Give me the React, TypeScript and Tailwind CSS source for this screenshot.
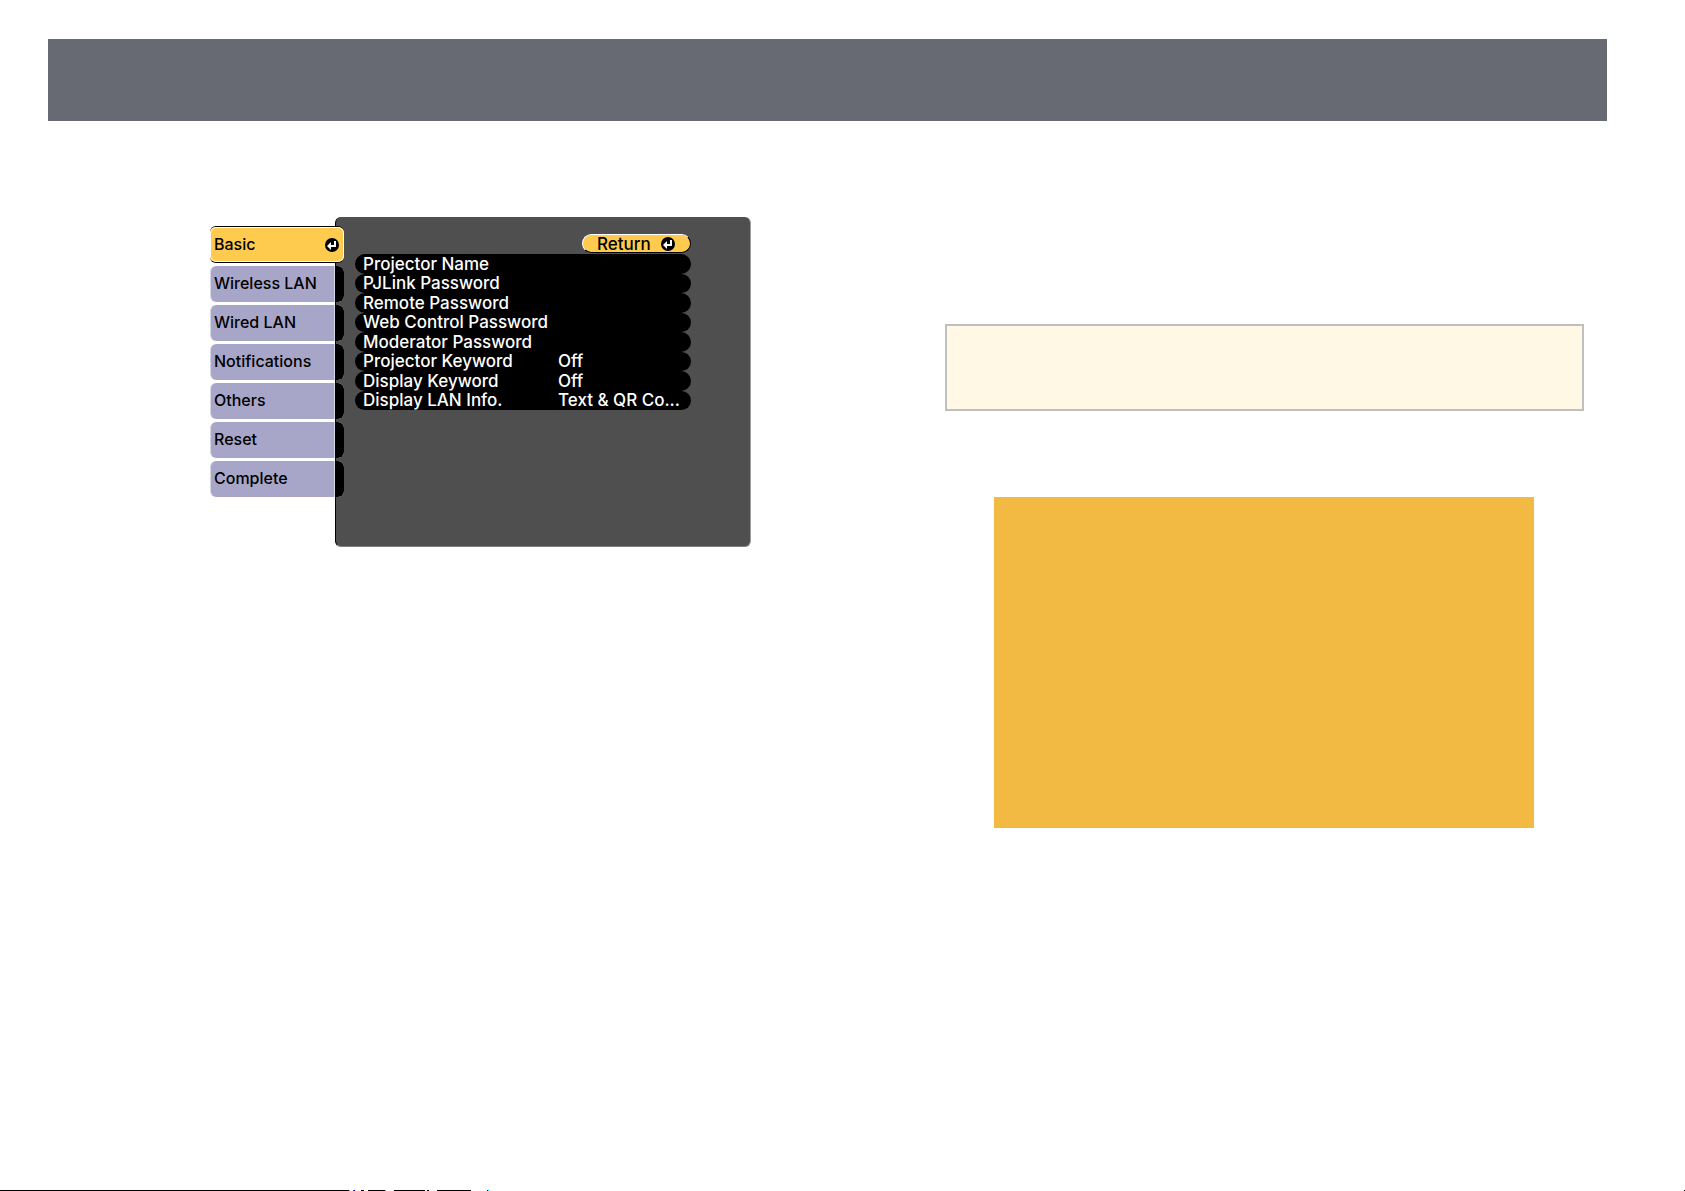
import clsx from 'clsx';

const tabs = [
  'Basic',
  'Wireless LAN',
  'Wired LAN',
  'Notifications',
  'Others',
  'Reset',
  'Complete',
];

const settings = [
  { label: 'Projector Name' },
  { label: 'PJLink Password' },
  { label: 'Remote Password' },
  { label: 'Web Control Password' },
  { label: 'Moderator Password' },
  { label: 'Projector Keyword', value: 'Off' },
  { label: 'Display Keyword', value: 'Off' },
  { label: 'Display LAN Info.', value: 'Text & QR Co...' },
];

function EnterIcon() {
  return (
    <svg viewBox="0 0 14 14" className="size-[14px] shrink-0" aria-hidden="true">
      <circle cx="7" cy="7" r="7" fill="#000" />
      <path d="M9 3h2v6H6v3L2 8l4-4v3h3z" fill="#fff" />
    </svg>
  );
}

type TabProps = {
  label: string;
  active: boolean;
};

function Tab({ label, active }: TabProps) {
  return (
    <button
      type="button"
      aria-current={active}
      className={clsx(
        'flex w-full items-stretch overflow-hidden rounded-md text-left text-black',
        active
          ? 'h-[37px] border-y border-black bg-[#ffcb4f]'
          : 'h-9 border-l border-[#d6d5e5] bg-[#a8a6c8]'
      )}
    >
      <span
        className={clsx(
          'flex flex-1 items-center justify-between pl-[3px]',
          active
            ? 'rounded-md border border-white pr-1'
            : 'border-r border-[#d6d5e5] pb-px'
        )}
      >
        {label}
        {active && <EnterIcon />}
      </span>
      {/* Cap that overlaps the settings panel */}
      {!active && <span className="w-[9px] rounded-r-md bg-black" />}
    </button>
  );
}

function NetworkMenu() {
  return (
    <div className="flex items-start font-['Inter',sans-serif] text-[17px] leading-[19px] font-medium">
      <nav className="z-10 -mr-[9px] flex w-[134px] shrink-0 flex-col gap-[3px] pt-[9px] text-[16px] whitespace-nowrap">
        {tabs.map((tab, i) => (
          <Tab key={tab} label={tab} active={i === 0} />
        ))}
      </nav>

      <section className="flex flex-1 flex-col rounded-md border-r border-b border-l border-r-[#a0a0a0] border-b-[#808080] border-l-black bg-[#4f4f4f] pt-[17px] pr-[59px] pb-[136px] pl-[19px]">
        <button
          type="button"
          className="mb-px flex h-[19px] w-[109px] items-center gap-[10px] self-end rounded-full border border-t-white border-r-black border-b-black border-l-white bg-[#ffcb4f] pt-px pl-[14px] text-black"
        >
          Return
          <EnterIcon />
        </button>
        <ul className="grid h-[156px] grid-rows-8">
          {settings.map(({ label, value }) => (
            <li key={label} className="flex">
              <button
                type="button"
                className="flex w-full items-center rounded-full bg-black pt-px pl-2 text-left whitespace-nowrap text-white"
              >
                <span className="w-[195px]">{label}</span>
                <span>{value}</span>
              </button>
            </li>
          ))}
        </ul>
      </section>
    </div>
  );
}

function FooterRule() {
  return (
    <footer className="mt-auto flex h-px">
      <span className="w-[349px] bg-black" />
      <span className="w-px bg-[#00ffff]" />
      <span className="ml-[3px] w-px bg-[#ff0000]" />
      <span className="w-px bg-[#0000ff]" />
      <span className="ml-[6px] w-[3px] bg-black" />
      <span className="ml-[4px] w-[17px] bg-black" />
      <span className="w-px bg-[#00ffff]" />
      <span className="ml-[8px] w-[31px] bg-black" />
      <span className="ml-[2px] w-[2px] bg-black" />
      <span className="ml-[8px] w-[34px] bg-black" />
      <span className="ml-[16px] w-px bg-black" />
      <span className="w-px bg-[#00ffff]" />
      <span className="ml-auto w-px bg-black" />
    </footer>
  );
}

export default function App() {
  return (
    <div className="flex min-h-screen flex-col bg-white">
      <header className="mt-[39px] mr-[78px] ml-[48px] h-[82px] bg-[#676a73]" />

      <main className="mr-[78px] ml-[48px] grid grid-cols-[780fr_779fr]">
        <div className="pt-24 pr-[77px] pl-[162px]">
          <NetworkMenu />
        </div>

        <div className="pt-[203px] pr-[23px] pl-[117px]">
          <div className="h-[87px] border-2 border-[#bfbfbf] bg-[#fff8e5]" />
          <div className="mt-[86px] mr-[50px] ml-[49px] h-[331px] bg-[#f2b943]" />
        </div>
      </main>

      <FooterRule />
    </div>
  );
}
